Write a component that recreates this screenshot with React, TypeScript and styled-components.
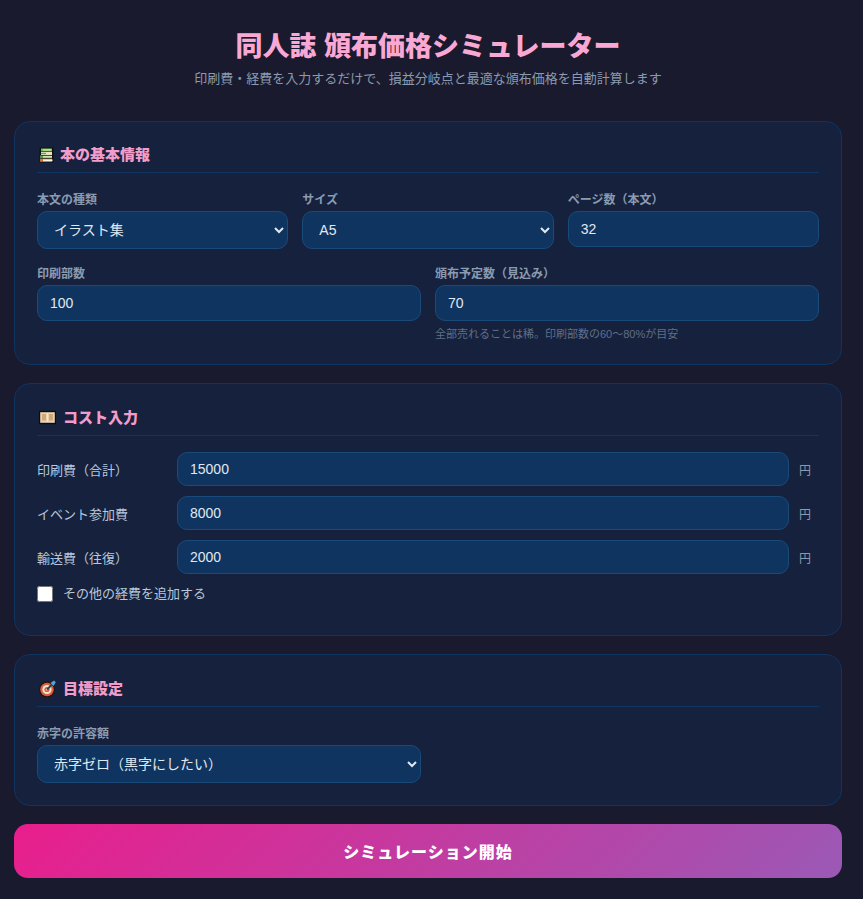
import React from 'react'
import styled, { createGlobalStyle } from 'styled-components'

const COLORS = {
  page: '#1a1a2e',
  card: '#16213e',
  cardBorder: '#0f3460',
  field: '#0f3460',
  fieldBorder: '#1a4a7a',
  pink: '#f9a8d4',
  muted: '#8a9bb0',
  text: '#e0e8f0',
}

const FONT = '"Liberation Sans", "Noto Sans CJK JP", sans-serif'

const GlobalStyle = createGlobalStyle`
  * { box-sizing: border-box; }
  html, body { margin: 0; padding: 0; }
  body {
    background: ${COLORS.page};
    color: ${COLORS.text};
    font-family: ${FONT};
  }
`

const Page = styled.main`
  padding: 27px 21px 21px 14px;
  width: 863px;
`

const Header = styled.header`
  text-align: center;
  margin-bottom: 32px;
`

const Title = styled.h1`
  margin: 0 0 2px;
  font-size: 27px;
  line-height: 40px;
  font-weight: 900;
  color: ${COLORS.pink};
`

const Subtitle = styled.p`
  margin: 0;
  font-size: 13px;
  line-height: 20px;
  color: ${COLORS.muted};
`

const Card = styled.section`
  background: ${COLORS.card};
  border: 1px solid ${COLORS.cardBorder};
  border-radius: 16px;
  padding: 22px;
  margin-bottom: 18px;
`

const CardTitle = styled.h2<{ $gap?: number; $iconGap?: number }>`
  display: flex;
  align-items: center;
  gap: ${(p) => p.$iconGap ?? 7}px;
  margin: 0 0 ${(p) => p.$gap ?? 18}px;
  padding: 0 0 6px 2px;
  border-bottom: 1px solid ${COLORS.cardBorder};
  font-size: 15px;
  line-height: 22px;
  font-weight: 900;
  color: #f29cc9;
`

const Row = styled.div<{ $cols: number }>`
  display: grid;
  grid-template-columns: repeat(${(p) => p.$cols}, 1fr);
  gap: 14px;
  align-items: start;
  margin-bottom: 16px;
  &:last-child { margin-bottom: 0; }
`

const Field = styled.div`
  display: flex;
  flex-direction: column;
  min-width: 0;
`

const Label = styled.label`
  font-size: 12px;
  line-height: 18px;
  font-weight: 700;
  color: ${COLORS.muted};
  margin-bottom: 2px;
`

const Hint = styled.div`
  font-size: 11px;
  line-height: 15px;
  color: #5f7088;
  margin-top: 6px;
`

const Input = styled.input`
  width: 100%;
  height: 36px;
  padding: 0 12px;
  background: ${COLORS.field};
  border: 1px solid ${COLORS.fieldBorder};
  border-radius: 10px;
  color: ${COLORS.text};
  font: 14px ${FONT};
  outline: none;
`

const Select = styled.select`
  width: 100%;
  height: 38px;
  padding: 0 12px;
  background: ${COLORS.field};
  border: 1px solid ${COLORS.fieldBorder};
  border-radius: 10px;
  color: ${COLORS.text};
  font: 14px ${FONT};
  outline: none;
`

const CostRow = styled.div`
  display: grid;
  grid-template-columns: 140px 1fr 30px;
  align-items: center;
  margin-bottom: 10px;
`

const CostLabel = styled.label`
  font-size: 13px;
  color: #b8c8dc;
`

const CostInput = styled(Input)`
  height: 34px;
`

const Unit = styled.span`
  font-size: 12px;
  color: ${COLORS.muted};
  padding-left: 10px;
`

const CheckRow = styled.label`
  display: flex;
  align-items: center;
  gap: 10px;
  font-size: 13px;
  line-height: 16px;
  color: #b8c8dc;
  margin: 12px 0 11px;
`

const Check = styled.input`
  width: 16px;
  height: 16px;
  margin: 0;
`

const Half = styled.div`
  width: 384px;
`

const StartButton = styled.button`
  display: block;
  width: 100%;
  height: 54px;
  border: none;
  border-radius: 14px;
  background: linear-gradient(135deg, #e91e8c, #9b59b6);
  color: #fff;
  font: 900 16px ${FONT};
  letter-spacing: 1px;
`

const BooksIcon = () => (
  <svg width="15" height="22" viewBox="0 0 15 22" aria-hidden="true">
    <rect x="0.5" y="3.5" width="14" height="15" rx="1" fill="#111" />
    <rect x="2" y="4.5" width="11" height="3" fill="#6fbf5a" />
    <rect x="4" y="5.3" width="8" height="1.2" fill="#d9e8b0" />
    <rect x="2" y="8" width="11" height="3" fill="#e8e4c0" />
    <rect x="2" y="8.8" width="5" height="1.4" fill="#5fa86a" />
    <rect x="1" y="11.5" width="12" height="2.8" fill="#4f9a55" />
    <rect x="4" y="12.2" width="9" height="1.3" fill="#f4f0d8" />
    <rect x="1" y="14.8" width="12" height="3" fill="#d9703a" />
    <rect x="4" y="15.4" width="9.5" height="1.8" fill="#fbf6e6" />
  </svg>
)

const BanknoteIcon = () => (
  <svg width="17" height="23" viewBox="0 0 17 23" aria-hidden="true">
    <rect x="0.5" y="5.5" width="16" height="12" fill="#e8d3b0" stroke="#0c0c0c" strokeWidth="1.4" />
    <rect x="3" y="8" width="4" height="6.5" fill="#d0a878" />
    <rect x="10" y="8" width="4" height="6.5" fill="#d0a878" />
    <rect x="8" y="7" width="1" height="9" fill="#f3e6d0" />
  </svg>
)

const TargetIcon = () => (
  <svg width="17" height="23" viewBox="0 0 17 23" aria-hidden="true">
    <circle cx="8" cy="12.5" r="8" fill="#2a0f0c" />
    <circle cx="8" cy="12.5" r="6.8" fill="#d9603a" />
    <circle cx="8" cy="12.5" r="4.6" fill="#f2e4d8" />
    <circle cx="8" cy="12.5" r="2.6" fill="#d9603a" />
    <circle cx="8" cy="12.5" r="1" fill="#f2e4d8" />
    <path d="M8 12.5 L14 6.5" stroke="#2f3f52" strokeWidth="1.8" />
    <path d="M11.5 6 L15 3.5 L16.8 5.3 L14.5 9 Z" fill="#4aa8d8" />
  </svg>
)

const costs = [
  { label: '印刷費（合計）', value: '15000' },
  { label: 'イベント参加費', value: '8000' },
  { label: '輸送費（往復）', value: '2000' },
]

export default function App() {
  return (
    <Page>
      <GlobalStyle />
      <Header>
        <Title>同人誌 頒布価格シミュレーター</Title>
        <Subtitle>印刷費・経費を入力するだけで、損益分岐点と最適な頒布価格を自動計算します</Subtitle>
      </Header>

      <Card>
        <CardTitle $iconGap={6}>
          <BooksIcon />
          本の基本情報
        </CardTitle>
        <Row $cols={3}>
          <Field>
            <Label>本文の種類</Label>
            <Select defaultValue="illust">
              <option value="illust">イラスト集</option>
            </Select>
          </Field>
          <Field>
            <Label>サイズ</Label>
            <Select defaultValue="a5">
              <option value="a5">A5</option>
            </Select>
          </Field>
          <Field>
            <Label>ページ数（本文）</Label>
            <Input type="number" defaultValue={32} />
          </Field>
        </Row>
        <Row $cols={2}>
          <Field>
            <Label>印刷部数</Label>
            <Input type="number" defaultValue={100} />
          </Field>
          <Field>
            <Label>頒布予定数（見込み）</Label>
            <Input type="number" defaultValue={70} />
            <Hint>全部売れることは稀。印刷部数の60〜80%が目安</Hint>
          </Field>
        </Row>
      </Card>

      <Card>
        <CardTitle $gap={16}>
          <BanknoteIcon />
          コスト入力
        </CardTitle>
        {costs.map((c) => (
          <CostRow key={c.label}>
            <CostLabel>{c.label}</CostLabel>
            <CostInput type="number" defaultValue={c.value} />
            <Unit>円</Unit>
          </CostRow>
        ))}
        <CheckRow>
          <Check type="checkbox" />
          その他の経費を追加する
        </CheckRow>
      </Card>

      <Card>
        <CardTitle>
          <TargetIcon />
          目標設定
        </CardTitle>
        <Half>
          <Field>
            <Label>赤字の許容額</Label>
            <Select defaultValue="zero">
              <option value="zero">赤字ゼロ（黒字にしたい）</option>
            </Select>
          </Field>
        </Half>
      </Card>

      <StartButton>シミュレーション開始</StartButton>
    </Page>
  )
}
